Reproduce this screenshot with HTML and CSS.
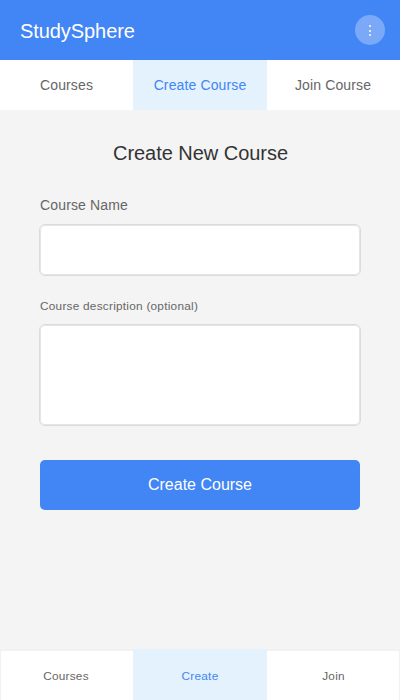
FILE: index.html
```html
<!DOCTYPE html>
<html lang="en">
<head>
<meta charset="utf-8">
<title>StudySphere</title>
<link rel="stylesheet" href="styles.css">
</head>
<body>
<header class="header">
  <div class="brand">StudySphere</div>
  <button class="menu" aria-label="Menu"><svg width="30" height="30" viewBox="0 0 30 30" fill="#fff" fill-opacity=".75"><rect x="14" y="10" width="2" height="2"/><rect x="14" y="15" width="2" height="2"/><rect x="14" y="19" width="2" height="2"/></svg></button>
</header>
<nav class="tabs">
  <a class="tab">Courses</a>
  <a class="tab active">Create Course</a>
  <a class="tab">Join Course</a>
</nav>
<main class="content">
  <h1 class="title">Create New Course</h1>
  <label class="label" for="name">Course Name</label>
  <input class="field" id="name">
  <label class="label small" for="desc">Course description (optional)</label>
  <textarea class="field area" id="desc"></textarea>
  <button class="submit">Create Course</button>
</main>
<nav class="bottom">
  <a class="item first">Courses</a>
  <a class="item active">Create</a>
  <a class="item last">Join</a>
</nav>
</body>
</html>
```
FILE: styles.css
```css
* { box-sizing: border-box; }
body {
  margin: 0;
  height: 700px;
  display: flex;
  flex-direction: column;
  background: #f4f4f4;
  font-family: "Liberation Sans", Arial, sans-serif;
  color: #666;
}
button { border: 0; padding: 0; font-family: inherit; color: #fff; }
.header {
  height: 60px;
  padding: 0 15px 0 20px;
  display: flex;
  align-items: center;
  justify-content: space-between;
  background: #4285f4;
}
.brand { font-size: 20px; line-height: 24px; padding-top: 2px; letter-spacing: -.07px; color: #fff; }
.menu { width: 30px; height: 30px; border-radius: 50%; background: rgba(255, 255, 255, .3); }
.menu svg { display: block; }
.tabs { height: 50px; display: grid; grid-template-columns: 133px 134px 133px; background: #fff; }
.tab { font-size: 14px; line-height: 50px; letter-spacing: .13px; text-align: center; }
.tab:last-child { padding-right: 1px; }
.active { background: #e3f2fd; color: #4285f4; }
.content { flex: 1; padding: 31px 40px 0; display: flex; flex-direction: column; }
.title { margin: 0; padding-left: 1px; font-size: 20px; line-height: 24px; font-weight: 400; letter-spacing: -.04px; text-align: center; color: #333; }
.label { margin-top: 32px; font-size: 14px; line-height: 16px; letter-spacing: .15px; }
.field {
  margin: 11px -1px 0;
  height: 52px;
  padding: 12px;
  border: 1px solid #dcdcdc;
  border-radius: 6px;
  box-shadow: inset 0 0 0 1px #e5e5e5;
  background: #fff;
  resize: none;
  font: inherit;
}
.small { margin-top: 23px; font-size: 11.8px; line-height: 14px; letter-spacing: .25px; }
.area { height: 102px; }
.submit { margin-top: 34px; height: 50px; border-radius: 5px; background: #4285f4; font-size: 16px; line-height: 50px; }
.bottom { height: 51px; display: grid; grid-template-columns: 133px 134px 133px; background: #fff; }
.item { font-size: 11.8px; line-height: 54px; letter-spacing: .25px; text-align: center; }
.first { padding-right: 1px; box-shadow: inset 0 2px #f2f2f2, inset 1px -1px #f2f2f2; }
.last { box-shadow: inset 0 2px #f2f2f2, inset -1px -1px #f2f2f2; }
```
